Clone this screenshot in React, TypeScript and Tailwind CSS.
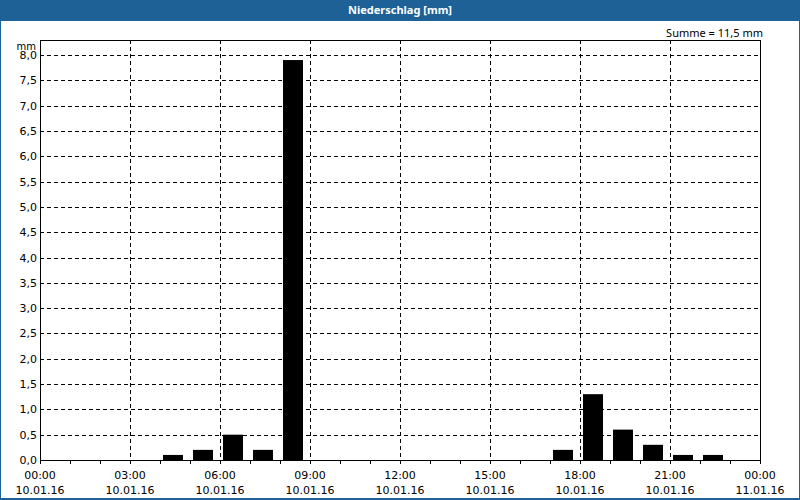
const bars: [number, number][] = [
  [4, 0.1], [5, 0.2], [6, 0.5], [7, 0.2], [8, 7.9],
  [17, 0.2], [18, 1.3], [19, 0.6], [20, 0.3], [21, 0.1], [22, 0.1],
];

const X0 = 40;
const Y0 = 460;
const PX_H = 30;
const PX_MM = (460 - 55) / 8;

function Chart() {
  const yTicks = Array.from({ length: 17 }, (_, i) => i * 0.5);
  const xTicks = Array.from({ length: 9 }, (_, i) => i * 3);
  return (
    <svg width={800} height={500} className="absolute left-0 top-0 pointer-events-none" style={{ fontFamily: 'Tahoma, "DejaVu Sans", sans-serif' }}>
      {yTicks.slice(1).map((v) => {
        const y = Math.round(Y0 - v * PX_MM);
        return <line key={v} x1={X0} x2={760} y1={y + 0.5} y2={y + 0.5} stroke="#000" strokeDasharray="4 3" />;
      })}
      {xTicks.slice(1, -1).map((h) => {
        const x = X0 + h * PX_H;
        return <line key={h} x1={x + 0.5} x2={x + 0.5} y1={40} y2={Y0} stroke="#000" strokeDasharray="4 3" />;
      })}
      {bars.map(([h, v]) => (
        <rect key={h} x={X0 + h * PX_H + 3} y={Y0 - v * PX_MM} width={20} height={v * PX_MM} fill="#000" />
      ))}
      <rect x={X0 + 0.5} y={40.5} width={720} height={420} fill="none" stroke="#000" />
      {Array.from({ length: 25 }, (_, h) => (
        <line key={h} x1={X0 + h * PX_H + 0.5} x2={X0 + h * PX_H + 0.5} y1={Y0} y2={Y0 + 4} stroke="#000" />
      ))}
      <text x={36} y={50} fontSize={10} textAnchor="end">mm</text>
      {yTicks.map((v) => (
        <text key={v} x={37} y={Math.round(Y0 - v * PX_MM) + 4} fontSize={11} textAnchor="end">
          {v.toFixed(1).replace('.', ',')}
        </text>
      ))}
      {xTicks.map((h) => (
        <g key={h}>
          <text x={X0 + h * PX_H} y={479} fontSize={11} textAnchor="middle">
            {`${String(h % 24).padStart(2, '0')}:00`}
          </text>
          <text x={X0 + h * PX_H} y={494} fontSize={11} textAnchor="middle">
            {h === 24 ? '11.01.16' : '10.01.16'}
          </text>
        </g>
      ))}
    </svg>
  );
}

export default function App() {
  return (
    <div className="relative w-[800px] h-[500px] flex flex-col bg-[#1d6196] font-['Tahoma','DejaVu_Sans',sans-serif]">
      <div className="h-[21px] flex items-center justify-center text-white text-[11px] font-bold">
        Niederschlag [mm]
      </div>
      <div className="relative flex-1 mx-[1px] mb-[2px] bg-white">
        <div className="flex justify-end pr-[36px] pt-[4px] text-[11px] text-black">Summe = 11,5 mm</div>
      </div>
      <Chart />
    </div>
  );
}
